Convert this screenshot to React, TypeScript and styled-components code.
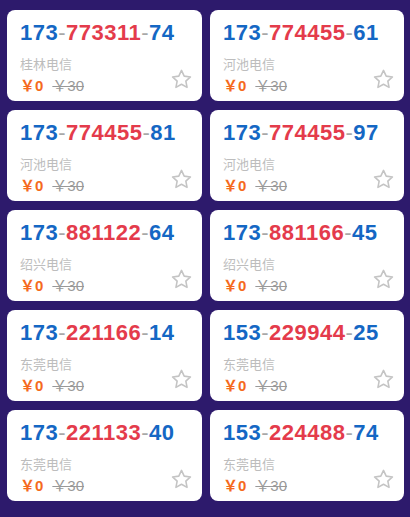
import React from "react";
import styled, { createGlobalStyle } from "styled-components";

type Phone = {
  prefix: string;
  middle: string;
  suffix: string;
  city: string;
};

const phones: Phone[] = [
  { prefix: "173", middle: "773311", suffix: "74", city: "桂林电信" },
  { prefix: "173", middle: "774455", suffix: "61", city: "河池电信" },
  { prefix: "173", middle: "774455", suffix: "81", city: "河池电信" },
  { prefix: "173", middle: "774455", suffix: "97", city: "河池电信" },
  { prefix: "173", middle: "881122", suffix: "64", city: "绍兴电信" },
  { prefix: "173", middle: "881166", suffix: "45", city: "绍兴电信" },
  { prefix: "173", middle: "221166", suffix: "14", city: "东莞电信" },
  { prefix: "153", middle: "229944", suffix: "25", city: "东莞电信" },
  { prefix: "173", middle: "221133", suffix: "40", city: "东莞电信" },
  { prefix: "153", middle: "224488", suffix: "74", city: "东莞电信" },
];

const GlobalStyle = createGlobalStyle`
  html, body {
    margin: 0;
    padding: 0;
    background: #2d1a6c;
    font-family: "Liberation Sans", Arial, "Noto Sans CJK SC", sans-serif;
  }
`;

const StarIcon = () => (
  <svg width="21" height="20" viewBox="0 0 24 23" fill="none">
    <path
      d="M12 1.6l3.1 6.6 7.2.9-5.3 4.9 1.4 7.1L12 17.6l-6.4 3.5 1.4-7.1-5.3-4.9 7.2-.9z"
      stroke="#c4c4c4"
      strokeWidth="1.8"
      strokeLinejoin="round"
    />
  </svg>
);

export const App = () => {
  return (
    <Page>
      <GlobalStyle />
      <Grid>
        {phones.map((p, i) => (
          <Card key={i}>
            <Number>
              <Part tone="blue">{p.prefix}</Part>
              <Dash>-</Dash>
              <Part tone="red">{p.middle}</Part>
              <Dash>-</Dash>
              <Part tone="blue">{p.suffix}</Part>
            </Number>
            <Bottom>
              <Info>
                <City>{p.city}</City>
                <PriceRow>
                  <Price>￥0</Price>
                  <OldPrice>￥30</OldPrice>
                </PriceRow>
              </Info>
              <StarButton>
                <StarIcon />
              </StarButton>
            </Bottom>
          </Card>
        ))}
      </Grid>
    </Page>
  );
};

const Page = styled.div`
  min-height: 517px;
  padding: 10px 6px 0 7px;
  box-sizing: border-box;
  background: #2d1a6c;
`;

const Grid = styled.div`
  display: grid;
  grid-template-columns: 195px 194px;
  column-gap: 8px;
  row-gap: 9px;
`;

const Card = styled.div`
  background: #fff;
  border-radius: 8px;
  height: 91px;
  box-sizing: border-box;
  padding: 9px 10px 5px 13px;
  display: flex;
  flex-direction: column;
`;

const Number = styled.div`
  font-size: 22px;
  font-weight: bold;
  line-height: 28px;
  height: 28px;
  letter-spacing: 0.5px;
  white-space: nowrap;
`;

const Part = styled.span<{ tone: "blue" | "red" }>`
  color: ${(p) => (p.tone === "blue" ? "#1467c4" : "#e43b4b")};
`;

const Dash = styled.span`
  color: #a8a8a8;
  font-weight: normal;
`;

const Bottom = styled.div`
  display: flex;
  justify-content: space-between;
  margin-top: 8px;
`;

const Info = styled.div`
  display: flex;
  flex-direction: column;
  gap: 3px;
`;

const City = styled.div`
  font-family: "Noto Sans CJK SC", sans-serif;
  font-size: 13px;
  line-height: 18px;
  color: #bdbdbd;
`;

const PriceRow = styled.div`
  display: flex;
  align-items: baseline;
  gap: 9px;
  line-height: 20px;
  font-size: 15px;
`;

const Price = styled.span`
  color: #f56a1c;
  font-weight: bold;
`;

const OldPrice = styled.span`
  color: #999;
  text-decoration: line-through;
`;

const StarButton = styled.div`
  align-self: flex-end;
  margin-bottom: 7px;
  display: flex;
`;

export default App;
